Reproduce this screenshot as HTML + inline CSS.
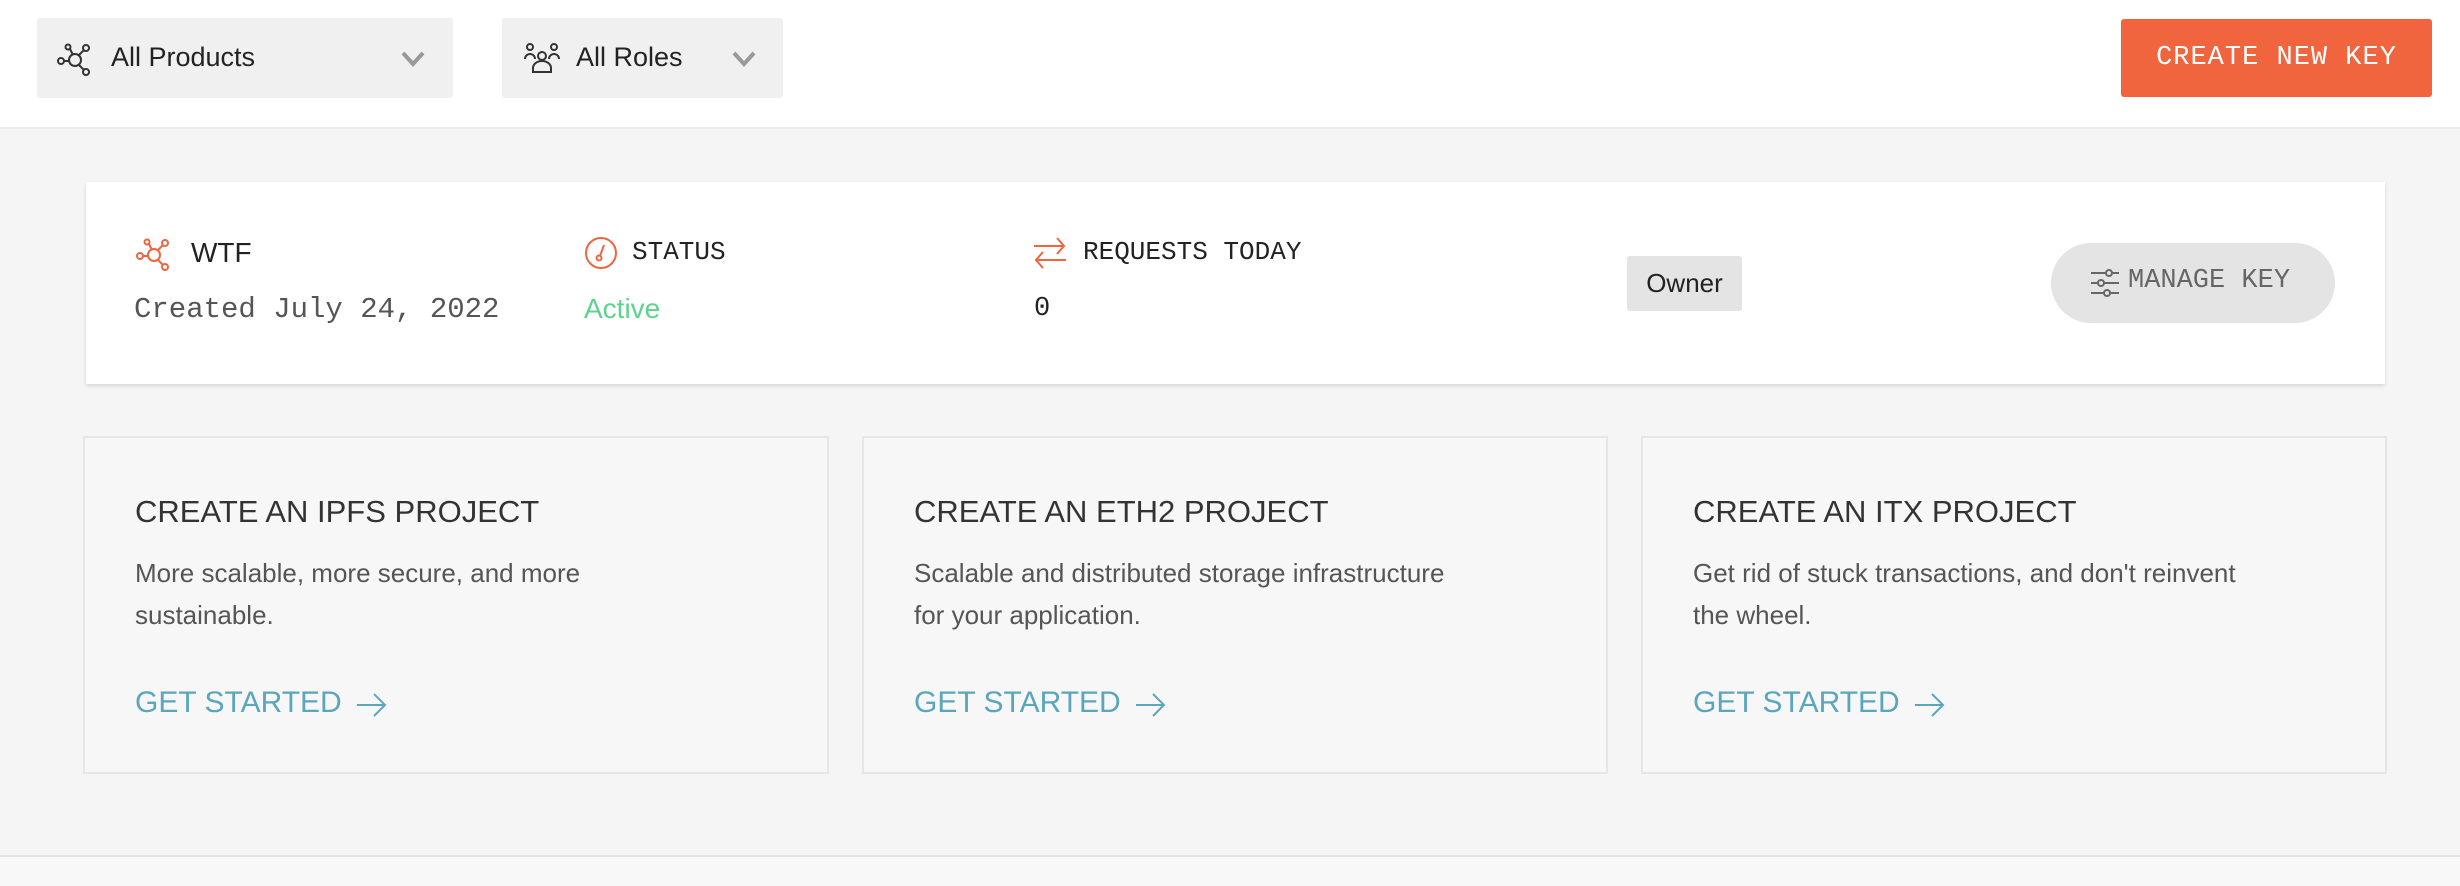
<!DOCTYPE html>
<html><head><meta charset="utf-8"><style>
*{box-sizing:border-box;margin:0;padding:0}
body{width:2460px;height:886px;background:#f5f5f5;font-family:"Liberation Sans",sans-serif;position:relative;overflow:hidden;color:#222}
.hdr{position:absolute;left:0;top:0;width:2460px;height:129px;background:#fff;border-bottom:2px solid #ececec}
.dd{position:absolute;top:18px;height:80px;background:#f0f0f0;border-radius:3px;font-size:27px;color:#222}
.dd span{position:absolute;top:24px}
.dd svg{position:absolute}
.btn{position:absolute;left:2121px;top:19px;width:311px;height:78px;background:#f0643e;border-radius:3px;color:#fff;font-family:"Liberation Mono",monospace;font-size:27px;text-align:center;line-height:78px;letter-spacing:1px}
.card{position:absolute;left:86px;top:182px;width:2299px;height:202px;background:#fff;box-shadow:0 2px 4px rgba(0,0,0,.12)}
.t{position:absolute;font-size:28px}
.mono{font-family:"Liberation Mono",monospace}
.pc{position:absolute;top:436px;height:338px;width:746px;border:2px solid #e6e6e6;background:#f7f7f7}
.pc h3{position:absolute;left:50px;top:56px;font-weight:normal;font-size:31px;color:#333}
.pc p{position:absolute;left:50px;top:114px;font-size:26px;line-height:42px;color:#555}
.pc a{position:absolute;left:50px;top:248px;font-size:30px;color:#5ba5bd;text-decoration:none}
.pc a svg{position:absolute;left:220px;top:6px}
</style></head><body>
<div class="hdr">
 <div class="dd" style="left:37px;width:416px">
  <svg style="left:20px;top:24px" width="36" height="34" viewBox="0 0 36 34" fill="none" stroke="#333" stroke-width="2"><circle cx="18" cy="18" r="6"/><circle cx="4" cy="19" r="3"/><circle cx="29" cy="6" r="3"/><circle cx="29" cy="30" r="3"/><circle cx="11" cy="5" r="2.5"/><path d="M7 19h5M22 13l5-5M22 23l5 5M13 7l3 6"/></svg>
  <span style="left:74px">All Products</span>
  <svg style="left:364px;top:33px" width="24" height="16" viewBox="0 0 24 16"><path d="M2 2l10 11L22 2" stroke="#999" stroke-width="4" fill="none"/></svg>
 </div>
 <div class="dd" style="left:502px;width:281px">
  <svg style="left:22px;top:24px" width="36" height="32" viewBox="0 0 36 32" fill="none" stroke="#333" stroke-width="2"><circle cx="18" cy="14" r="4"/><circle cx="6" cy="5" r="3"/><circle cx="30" cy="5" r="3"/><path d="M9 30v-4a9 7 0 0 1 18 0v4zM1 17a5 5 0 0 1 10 0M25 17a5 5 0 0 1 10 0"/></svg>
  <span style="left:74px">All Roles</span>
  <svg style="left:230px;top:33px" width="24" height="16" viewBox="0 0 24 16"><path d="M2 2l10 11L22 2" stroke="#999" stroke-width="4" fill="none"/></svg>
 </div>
 <div class="btn">CREATE NEW KEY</div>
</div>
<div class="card">
 <svg style="position:absolute;left:48px;top:55px" width="40" height="34" viewBox="0 0 36 34" fill="none" stroke="#f0643e" stroke-width="2"><circle cx="18" cy="18" r="6"/><circle cx="4" cy="19" r="3"/><circle cx="29" cy="6" r="3"/><circle cx="29" cy="30" r="3"/><circle cx="11" cy="5" r="2.5"/><path d="M7 19h5M22 13l5-5M22 23l5 5M13 7l3 6"/></svg>
 <div class="t" style="left:105px;top:55px">WTF</div>
 <div class="t mono" style="left:48px;top:111px;color:#555;font-size:29px">Created July 24, 2022</div>
 <svg style="position:absolute;left:498px;top:54px" width="34" height="34" viewBox="0 0 34 34" fill="none" stroke="#f0643e" stroke-width="2"><circle cx="17" cy="17" r="15"/><circle cx="15" cy="22" r="2.5"/><path d="M16 20l4-11"/></svg>
 <div class="t mono" style="left:546px;top:55px;font-size:26px">STATUS</div>
 <div class="t" style="left:498px;top:111px;color:#5fd38d">Active</div>
 <svg style="position:absolute;left:946px;top:53px" width="36" height="36" viewBox="0 0 36 36" fill="none" stroke="#f0643e" stroke-width="2"><path d="M2 11h30M25 3l7 8-7 8M34 25H4M11 17l-7 8 7 8"/></svg>
 <div class="t mono" style="left:997px;top:55px;font-size:26px">REQUESTS TODAY</div>
 <div class="t mono" style="left:948px;top:112px;font-size:27px">0</div>
 <div style="position:absolute;left:1541px;top:74px;width:115px;height:55px;background:#e4e4e4;border-radius:3px;font-size:26px;line-height:55px;text-align:center">Owner</div>
 <div style="position:absolute;left:1965px;top:61px;width:284px;height:80px;background:#e4e4e4;border-radius:40px"></div>
 <svg style="position:absolute;left:2003px;top:85px" width="32" height="32" viewBox="0 0 32 32" fill="none" stroke="#666" stroke-width="2"><path d="M2 6h28M2 16h28M2 26h28"/><circle cx="20" cy="6" r="3" fill="#e4e4e4"/><circle cx="12" cy="16" r="3" fill="#e4e4e4"/><circle cx="18" cy="26" r="3" fill="#e4e4e4"/></svg>
 <div class="t mono" style="left:2042px;top:84px;font-size:27px;color:#666">MANAGE KEY</div>
</div>
<div class="pc" style="left:83px"><h3>CREATE AN IPFS PROJECT</h3><p style="width:500px">More scalable, more secure, and more sustainable.</p><a>GET STARTED<svg width="34" height="26" viewBox="0 0 34 26" fill="none" stroke="#5ba5bd" stroke-width="2"><path d="M2 13h28M19 2l11 11-11 11"/></svg></a></div>
<div class="pc" style="left:862px"><h3>CREATE AN ETH2 PROJECT</h3><p style="width:540px">Scalable and distributed storage infrastructure for your application.</p><a>GET STARTED<svg width="34" height="26" viewBox="0 0 34 26" fill="none" stroke="#5ba5bd" stroke-width="2"><path d="M2 13h28M19 2l11 11-11 11"/></svg></a></div>
<div class="pc" style="left:1641px"><h3>CREATE AN ITX PROJECT</h3><p style="width:572px">Get rid of stuck transactions, and don't reinvent the wheel.</p><a>GET STARTED<svg width="34" height="26" viewBox="0 0 34 26" fill="none" stroke="#5ba5bd" stroke-width="2"><path d="M2 13h28M19 2l11 11-11 11"/></svg></a></div>
<div style="position:absolute;left:0;top:855px;width:2460px;height:31px;border-top:2px solid #e4e4e4;background:#f8f8f8"></div>
</body></html>
